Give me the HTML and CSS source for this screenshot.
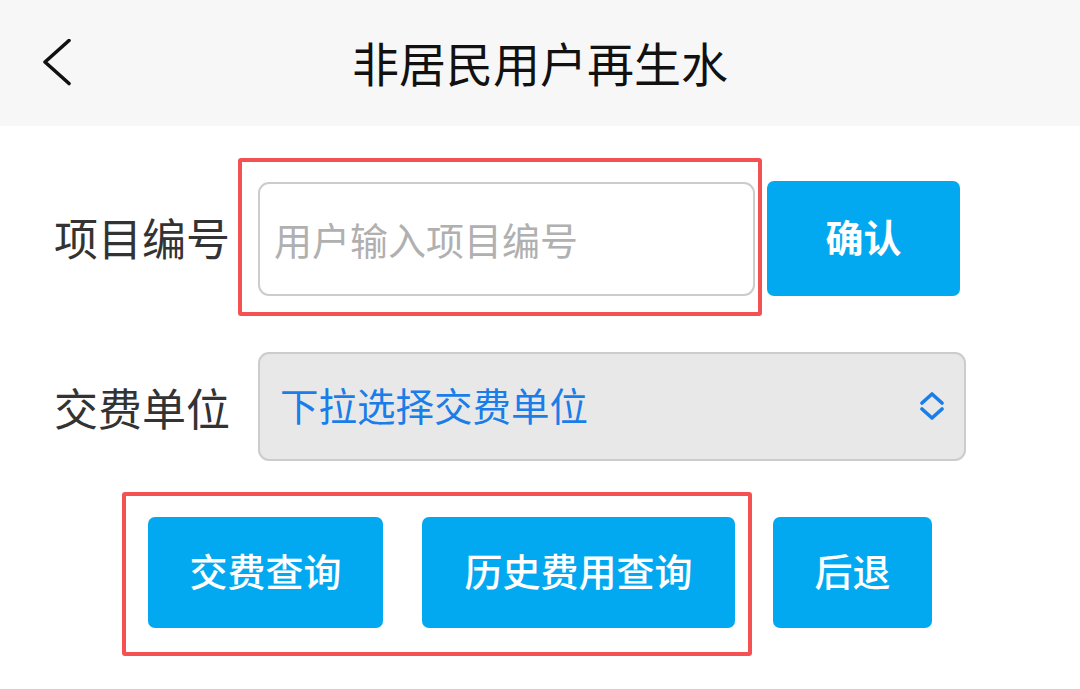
FILE: index.html
```html
<!DOCTYPE html>
<html lang="zh-CN">
<head>
<meta charset="utf-8">
<title>非居民用户再生水</title>
<link rel="stylesheet" href="styles.css">
</head>
<body>
<header class="topbar">
  <div class="back">
    <svg width="30" height="48" viewBox="0 0 30 48" fill="none" stroke="#111" stroke-width="3.6" stroke-linecap="round" stroke-linejoin="round"><path d="M26 1.5 L2 23 L26 44.5"/></svg>
  </div>
  <h1 class="title">非居民用户再生水</h1>
  <div></div>
</header>
<main class="content">
  <div class="row row-code">
    <label class="label">项目编号</label>
    <div class="mark mark-input">
      <div class="input">用户输入项目编号</div>
    </div>
    <button class="btn btn-confirm">确认</button>
  </div>
  <div class="row row-unit">
    <label class="label">交费单位</label>
    <div class="select">
      <span class="select-text">下拉选择交费单位</span>
      <svg class="select-icon" width="26" height="28" viewBox="0 0 26 28" fill="none" stroke="#1a7de8" stroke-width="3.6" stroke-linecap="round" stroke-linejoin="round"><path d="M3 11 L13 2 L23 11"/><path d="M3 17 L13 26 L23 17"/></svg>
    </div>
  </div>
  <div class="row row-actions">
    <div class="mark mark-actions">
      <button class="btn btn-query">交费查询</button>
      <button class="btn btn-history">历史费用查询</button>
    </div>
    <button class="btn btn-back">后退</button>
  </div>
</main>
</body>
</html>
```
FILE: styles.css
```css
* { box-sizing: border-box; }
html, body {
  margin: 0;
  padding: 0;
  background: #ffffff;
  width: 1080px;
  height: 689px;
  overflow: hidden;
  font-family: "Noto Sans CJK SC", "Noto Sans", sans-serif;
}
.topbar {
  height: 126px;
  background: #f7f7f7;
  display: grid;
  grid-template-columns: 1fr auto 1fr;
  align-items: center;
}
.back {
  padding-left: 43px;
  display: flex;
  align-items: center;
  height: 48px;
}
.title {
  margin: 0;
  font-size: 47px;
  font-weight: 400;
  color: #111;
  line-height: 1;
  padding-bottom: 4px;
}
.content {
  padding-top: 32px;
}
.row {
  display: flex;
  align-items: center;
}
.label {
  flex: none;
  width: 238px;
  padding-left: 54px;
  font-size: 44px;
  color: #333;
  line-height: 1;
  white-space: nowrap;
}
.row-unit .label {
  width: 258px;
}
.mark {
  border: 4px solid #f45252;
  border-radius: 3px;
}
.mark-input {
  width: 524px;
  height: 158px;
  padding: 20px 3px 16px 16px;
}
.input {
  height: 114px;
  border: 2px solid #cccccc;
  border-radius: 11px;
  background: #fff;
  display: flex;
  align-items: center;
  padding-left: 14px;
  padding-bottom: 2px;
  font-size: 38px;
  color: #b0b0b0;
}
.btn {
  border: none;
  background: #03a9f0;
  color: #fff;
  font-family: "Noto Sans CJK SC", "Noto Sans", sans-serif;
  font-size: 38px;
  font-weight: 500;
  border-radius: 7px;
  padding: 0 0 6px 0;
  height: 111px;
  line-height: 1;
}
.btn-confirm {
  width: 193px;
  height: 115px;
  margin-left: 5px;
  margin-top: 2px;
  font-weight: 700;
  padding-bottom: 4px;
}
.row-unit {
  margin-top: 36px;
}
.select {
  width: 708px;
  height: 109px;
  background: #e8e8e8;
  border: 2px solid #cccccc;
  border-radius: 11px;
  display: flex;
  align-items: center;
  justify-content: space-between;
  padding: 0 19px 0 20px;
}
.select-text {
  font-size: 38.5px;
  color: #1a7de8;
  line-height: 1;
  padding-bottom: 4px;
}
.select-icon {
  margin-top: -2px;
}
.row-actions {
  margin-top: 31px;
  padding-left: 122px;
}
.mark-actions {
  width: 630px;
  height: 164px;
  display: flex;
  align-items: flex-start;
  padding: 21px 0 0 22px;
  gap: 39px;
}
.btn-query { width: 235px; }
.btn-history { width: 313px; }
.btn-back {
  width: 159px;
  margin-left: 21px;
  align-self: flex-start;
  margin-top: 25px;
}
```
